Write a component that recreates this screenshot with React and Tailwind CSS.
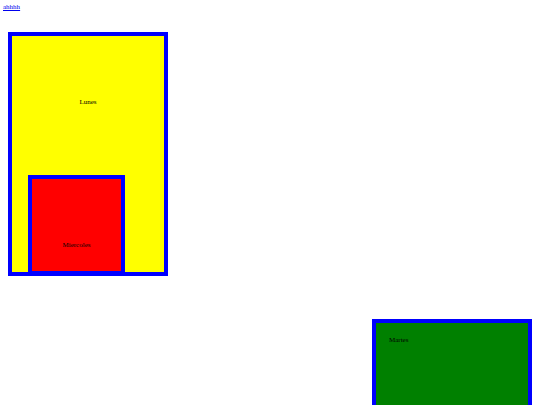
export default function App() {
  return (
    <div className="w-[540px] h-[405px] overflow-hidden bg-white pl-[3px] pt-[3px] font-['Liberation_Serif',serif] text-[7px] leading-[8px] text-black">
      <div className="h-[8px]">
        <a href="#" className="text-[#0000ee] underline">ahhhh</a>
      </div>
      <div className="ml-[5px] mt-[21px] box-border w-[160px] h-[244px] border-4 border-[#0000ff] bg-[#ffff00]">
        <div className="pt-[62px] text-center h-[69px]">Lunes</div>
        <div className="ml-[16px] mt-[70px] box-border w-[97px] h-[100px] border-4 border-[#0000ff] bg-[#ff0000]">
          <div className="pt-[62px] text-center">Miercoles</div>
        </div>
      </div>
      <div className="ml-[369px] mt-[43px] box-border w-[160px] h-[244px] border-4 border-[#0000ff] bg-[#008000]">
        <div className="pl-[13px] pt-[13px]">Martes</div>
      </div>
    </div>
  );
}
